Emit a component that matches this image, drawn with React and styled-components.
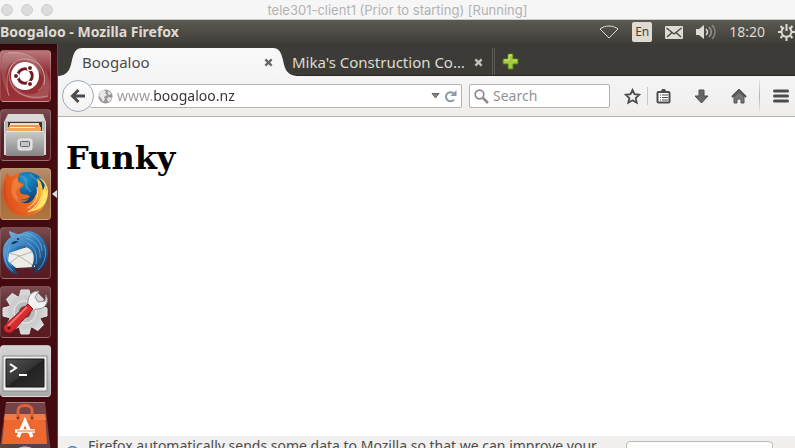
import React from "react";
import styled, { createGlobalStyle, css } from "styled-components";

const GlobalStyle = createGlobalStyle`
  *, *::before, *::after { box-sizing: border-box; }
  body { margin: 0; background: #fff; font-family: "Noto Sans", sans-serif; font-size: 14px; line-height: 20px; }
  button { padding: 0; border: 0; background: none; font: inherit; color: inherit; }
  svg { display: block; flex: none; }
`;

const Screen = styled.div`
  display: flex;
  flex-direction: column;
  height: 100vh;
  overflow: hidden;
`;

/* Host window title */
const HostBar = styled.header`
  display: grid;
  grid-template-columns: 1fr auto 1fr;
  align-items: center;
  flex: none;
  height: 20px;
  background: #f6f6f6;
  border-bottom: 1px solid #cbcdc4;
`;
const Lights = styled.div`
  display: flex;
  gap: 8px;
  padding-left: 1px;
`;
const Light = styled.button`
  width: 12px;
  height: 12px;
  border: 1px solid #cfcfcf;
  border-radius: 50%;
  background: #dcdcdc;
`;
const HostTitle = styled.div`
  color: #b2b2b2;
  font: 13px/18px "Inter", sans-serif;
  white-space: nowrap;
`;

/* Guest top panel */
const Panel = styled.div`
  display: flex;
  align-items: center;
  justify-content: space-between;
  flex: none;
  height: 24px;
  overflow: hidden;
  background: linear-gradient(#5b5a50, #3e3d39);
  color: #dfdbd2;
  white-space: nowrap;
`;
const PanelTitle = styled.strong`
  font-size: 14px;
  font-weight: 700;
`;
const Indicators = styled.div`
  display: flex;
  align-items: center;
  gap: 13px;
`;
const Indicator = styled.button`
  display: flex;
  align-items: center;
`;
const Language = styled.button`
  width: 20px;
  height: 20px;
  border-radius: 2px;
  background: #dfdbd2;
  color: #45443f;
  font-size: 12px;
`;

/* Launcher */
const Desktop = styled.div`
  display: flex;
  flex: 1;
  min-height: 0;
`;
const Launcher = styled.nav`
  display: flex;
  flex-direction: column;
  gap: 7px;
  flex: none;
  width: 58px;
  padding-top: 6px;
  overflow: hidden;
  background: linear-gradient(#30070a, #430b10 14px);
  border-right: 1px solid #7c3b41;
`;
const tones = {
  home: "linear-gradient(#b8777a, #8e2c30 45%, #9b3237)",
  dark: "linear-gradient(#7b4a4e, #54252a 50%, #5a1a20)",
  orange: "linear-gradient(#b98e6c, #a06a3e 50%, #b0763f)",
  grey: "linear-gradient(#d5d5d5, #a9a9a9)",
};
const LauncherButton = styled.button`
  display: flex;
  align-items: center;
  justify-content: center;
  flex: none;
  width: 51px;
  height: 52px;
  border: 1px solid rgba(255, 255, 255, 0.22);
  border-left-color: rgba(255, 255, 255, 0.12);
  border-radius: 4px;
  background: ${(p) => tones[p.$tone]};
`;
const LauncherRow = styled.div`
  display: flex;
  align-items: center;
  justify-content: space-between;
  flex: none;
`;
const FoldedButton = styled.button`
  flex: none;
  width: 51px;
  margin-top: -2px;
`;

/* Browser */
const Browser = styled.main`
  display: flex;
  flex-direction: column;
  flex: 1;
  min-width: 0;
`;
const TabStrip = styled.div`
  display: flex;
  align-items: flex-end;
  flex: none;
  height: 32px;
  background: #3c3b37;
  border-bottom: 1px solid #2c2522;
`;
const TabBox = styled.div`
  display: flex;
  align-items: stretch;
  height: 28px;
  margin-bottom: -1px;
  color: ${(p) => (p.$active ? "#4c4c4c" : "#dfdbd2")};
`;
const TabBody = styled.div`
  display: flex;
  align-items: center;
  justify-content: space-between;
  width: 191px;
  background: ${(p) => (p.$active ? "linear-gradient(#fafafa, #f5f4f4)" : "none")};
`;
const TabLabel = styled.button`
  flex: 1;
  min-width: 0;
  font-size: 15px;
  text-align: left;
  white-space: nowrap;
`;
const CloseButton = styled.button`
  display: flex;
  align-items: center;
`;
const InactiveTabs = styled.div`
  display: flex;
  align-items: flex-end;
  margin-left: -5px;
`;
const TabDivider = styled.div`
  width: 3px;
  height: 27px;
  margin-left: 9px;
  border: solid #5b5a55;
  border-width: 0 1px;
`;
const NewTab = styled.button`
  display: flex;
  align-items: center;
  height: 28px;
  padding-left: 7px;
`;
const Toolbar = styled.div`
  display: flex;
  align-items: center;
  flex: none;
  height: 41px;
  padding: 0 5px 0 4px;
  background: linear-gradient(#f6f5f5, #efeeed);
  border-bottom: 1px solid #b5b2ae;
`;
const BackButton = styled.button`
  display: flex;
  align-items: center;
  justify-content: center;
  flex: none;
  z-index: 1;
  width: 32px;
  height: 32px;
  margin-right: -4px;
  border: 1px solid #9dabb9;
  border-radius: 50%;
  background: linear-gradient(#fdfdfd, #f3f3f3);
`;
const Field = styled.div`
  display: flex;
  align-items: center;
  gap: 4px;
  flex: ${(p) => p.$grow} 1 0;
  min-width: 0;
  height: 24px;
  padding: 0 4px;
  border: 1px solid #b5b1ac;
  border-radius: 2px;
  background: #fff;
  ${(p) => p.$address && css`
    margin-right: 7px;
    padding-left: 8px;
    border-left: 0;
  `}
`;
const TextInput = styled.input`
  flex: 1;
  min-width: 0;
  height: 20px;
  padding: 0;
  border: 0;
  outline: 0;
  background: none;
  color: #333;
  font: 14px/20px "Noto Sans", sans-serif;
  &::placeholder { color: #929292; opacity: 1; }
`;
const AddressInput = styled(TextInput)`
  color: transparent;
  background: linear-gradient(90deg, #999 37px, #333 37px);
  background-clip: text;
  -webkit-background-clip: text;
`;
const Tools = styled.div`
  display: flex;
  align-items: center;
  flex: none;
  padding-left: 13px;
`;
const ToolGroup = styled.div`
  display: flex;
  gap: 20px;
`;
const ToolButton = styled.button`
  display: flex;
  align-items: center;
  justify-content: center;
  width: 18px;
  height: 24px;
`;
const ToolDivider = styled.div`
  width: 1px;
  height: ${(p) => (p.$tall ? "32px" : "18px")};
  margin: ${(p) => (p.$tall ? "0 12px 0 11px" : "0 6px")};
  background: ${(p) => (p.$tall ? "linear-gradient(#e8e8e8, #a9b2bb, #e8e8e8)" : "#c3c9cf")};
`;
const Page = styled.article`
  flex: 1;
  min-height: 0;
  padding: 21px 8px;
  background: #fff;
`;
const Heading = styled.h1`
  margin: 0;
  color: #000;
  font: 700 32px/40px "DejaVu Serif", serif;
`;
const Notice = styled.aside`
  display: flex;
  align-items: flex-start;
  flex: none;
  gap: 8px;
  height: 12px;
  padding: 0 22px 0 7px;
  overflow: hidden;
  background: #f1f0ef;
  color: #4c4c4c;
`;
const NoticeIcon = styled.span`
  padding-top: 10px;
`;
const NoticeText = styled.p`
  flex: 1;
  margin: 0;
  white-space: nowrap;
`;
const NoticeButton = styled.button`
  flex: none;
  width: 147px;
  height: 28px;
  margin-top: 5px;
  border: 1px solid #bdb9b4;
  border-radius: 4px;
  background: #fcfcfc;
`;

function UbuntuIcon() {
  return (
    <svg width="49" height="50" viewBox="0 0 49 50">
      <g fill="none" stroke="#fff">
        <path d="M8 45C2 24 10 7 25 8c13 1 21 12 18 26" opacity=".35" />
        <path d="M7 2C23 0 37 7 42 20c3 8 1 16-5 20" opacity=".35" />
        <path d="M47 45C30 49 13 44 9 30 7 22 8 15 14 11" opacity=".35" />
      </g>
      <path d="M3 2C23 0 40 8 42 26l-5-6C32 9 22 6 12 11 4 15 3 27 8 45-1 28-2 12 3 2" fill="#fff" opacity=".14" />
      <path d="M47 46C30 52 10 44 8 27l5 6c6 10 15 13 24 8 7-5 8-13 7-23 5 8 6 19 3 28" fill="#fff" opacity=".15" />
      <circle cx="24" cy="25" r="14" fill="#fff" />
      <circle cx="24" cy="25" r="7.2" fill="none" stroke="#701e22" strokeWidth="3" />
      <g stroke="#fff" strokeWidth="1.2">
        <path d="M24 25 16 25M24 25l5-8M24 25l5 8" />
        <g fill="#701e22"><circle cx="15" cy="25" r="2.6" /><circle cx="29" cy="17" r="2.6" /><circle cx="29" cy="33" r="2.6" /></g>
      </g>
      <circle cx="24" cy="25" r="5.4" fill="#fff" />
    </svg>
  );
}

function FilesIcon() {
  return (
    <svg width="49" height="50" viewBox="0 0 49 50">
      <defs><linearGradient id="cab" x1="0" y1="0" x2="0" y2="1"><stop stopColor="#ccc" /><stop offset="1" stopColor="#858585" /></linearGradient></defs>
      <path d="M7 4h35l3 8v33H3V12z" fill="#d9d9d9" />
      <path d="M4 11h40v12H4z" fill="#b9b9b9" />
      <path d="M7 12h34v10H7z" fill="#3c302a" />
      <path d="M9 13h29v3H9z" fill="#eee1cc" /><path d="M8 15h31v3H8z" fill="#ef9348" /><path d="M7 17h33v4H7z" fill="#f4a65a" /><path d="M9 17h25v1H9z" fill="#fff1cf" />
      <path d="M5 21h38v25H5z" fill="url(#cab)" /><path d="M5 21.500h38" stroke="#e9e9e9" />
      <rect x="17" y="29" width="14" height="11" rx="2" fill="#d8d8d8" stroke="#eee" />
      <rect x="19.500" y="31.500" width="9" height="5" rx="1" fill="#c5c5c5" stroke="#666" />
    </svg>
  );
}

function FirefoxIcon() {
  return (
    <svg width="49" height="50" viewBox="0 0 49 50">
      <defs>
        <radialGradient id="globe" cx=".45" cy=".2" r=".7"><stop stopColor="#2396cc" /><stop offset=".5" stopColor="#11619e" /><stop offset="1" stopColor="#142f60" /></radialGradient>
        <linearGradient id="fox" x1="0" y1=".7" x2="1" y2=".4"><stop stopColor="#dd4a1b" /><stop offset=".6" stopColor="#ee7023" /><stop offset=".85" stopColor="#f8b23a" /><stop offset="1" stopColor="#ffe863" /></linearGradient>
      </defs>
      <circle cx="26" cy="22" r="19" fill="url(#globe)" />
      <path d="M19 7c5 1 7 4 6 8s3 5 5 8M29 5c2 4 7 4 8 9" stroke="#5cb6dc" strokeWidth="2" fill="none" opacity=".4" />
      <path d="M4 8C3 13 1 19 2 26c1 12 10 21 22 21 13 0 22-9 22-22 0-3-1-6-2-9-1 2-1 4-2 6-1-6-2-10-6-13 2 8 1 14-2 18-2 5-6 8-11 7-4 0-6-3-7-5 5 3 9 1 13-1-1-3-5-2-8-3-3-2-3-5 0-7l2-2c-2-3-5-2-6-5 0-2 1-5 2-7-4 0-6 2-8 4-2-1-4-2-5-4" fill="url(#fox)" />
      <path d="M37 8c6 5 9 10 9 17l-4-5c0 12-5 19-15 23 13-1 20-9 20-20 0-6-3-12-10-15" fill="#ffe469" />
      <path d="M36 18c2 9-1 16-9 21m14-13c-2 8-7 13-14 17" stroke="#fff19b" strokeWidth="1.300" fill="none" opacity=".7" />
      <path d="M12 12c1-2 3-3 5-3-1 3 0 5 4 7-5 3-7 6-5 11 3 5 7 4 12 3-4 4-9 5-13 1C9 26 10 18 12 12" fill="#f58a45" opacity=".65" />
      <path d="M5 11c-4 9-2 21 6 29 5 4 10 6 16 5-11 1-21-7-22-18-1-6 0-11 0-16" fill="#bf3917" opacity=".45" />
    </svg>
  );
}

function ThunderbirdIcon() {
  return (
    <svg width="49" height="50" viewBox="0 0 49 50">
      <defs><linearGradient id="bird" x1=".1" y1="0" x2=".8" y2="1"><stop stopColor="#75b4dd" /><stop offset=".45" stopColor="#3079b9" /><stop offset="1" stopColor="#15345f" /></linearGradient></defs>
      <path d="M12 8C4 12 1 19 2 28c1 11 8 18 15 19-4-7-5-14 0-20 6-5 8-11 5-15z" fill="url(#bird)" />
      <path d="m8 25 18-6 9 5-1 15-19 1-8-7z" fill="#eeece8" />
      <path d="m8 25 11 3 14-5M9 35l9-7 15 10" stroke="#b6b3ad" fill="none" />
      <path d="M8 3c7 2 9 5 15 1 8-3 18 3 21 11 7 13 1 26-12 31 2-4 4-8 3-12-1 4-3 6-6 8 6-10 5-20-4-23-4-2-8-2-12 2-6 0-7 5-10 7 0-6 3-12 10-15-2-3-5-6-5-10" fill="url(#bird)" />
      <path d="M25 5c9 2 16 9 16 18M25 10c10 3 15 10 14 20M26 15c8 4 11 11 9 21m8-19c4 10 0 19-6 25M5 21C2 31 5 38 12 43M8 19c-3 9-2 15 3 19m5-29c4-4 9-2 14 0" stroke="#7bbae7" fill="none" opacity=".65" />
      <path d="M10 16c2-3 5-4 8-2-3 0-4 3-8 2" fill="#13365f" /><circle cx="17" cy="11" r="1" fill="#122d4f" />
    </svg>
  );
}

function SettingsIcon() {
  const teeth = Array.from({ length: 8 }, (_, i) => i * 45);
  return (
    <svg width="49" height="50" viewBox="0 0 49 50">
      <g fill="#d5d5d5" stroke="#e6e6e6">
        {teeth.map((a) => <path key={a} d="M20 3h8l2 8H18z" transform={`rotate(${a} 24 25)`} />)}
      </g>
      <circle cx="24" cy="25" r="17" fill="#cdcdcd" /><circle cx="24" cy="25" r="11" fill="#bcbcbc" stroke="#eee" /><circle cx="24" cy="25" r="6" fill="#71464a" />
      <path d="M27 19c-1-8 2-15 11-15l-4 6 3 5 7-1 1-6c4 8-2 15-10 14l-5 3-4-3z" fill="#f2f2f2" stroke="#929292" />
      <path d="m27 17 5 5-20 22c-5 5-12-1-8-6z" fill="#d82b2d" stroke="#8f171c" />
      <path d="M26 20 7 39" stroke="#f27470" strokeWidth="2" /><circle cx="8" cy="41" r="1.500" fill="#4c0f12" />
    </svg>
  );
}

function TerminalIcon() {
  return (
    <svg width="49" height="50" viewBox="0 0 49 50">
      <defs><linearGradient id="term" x1="0" y1="0" x2="1" y2="1"><stop stopColor="#555" /><stop offset=".5" stopColor="#333" /><stop offset=".51" stopColor="#222" /><stop offset="1" stopColor="#303030" /></linearGradient></defs>
      <path d="M2 10h44v35H2z" fill="#eee" stroke="#8a8a8a" />
      <path d="M5 13h38v28H5z" fill="url(#term)" stroke="#191919" />
      <path d="m9 18 6 4-6 4" fill="none" stroke="#fff" strokeWidth="2" /><path d="M18 29h8" stroke="#fff" strokeWidth="2" />
    </svg>
  );
}

function SoftwareIcon() {
  return (
    <svg width="51" height="52" viewBox="0 0 51 52">
      <path d="M6 0h39l6 52H-1z" fill="#734347" /><path d="M6 .5h39" stroke="#a77c7e" />
      <path d="M5 12h40l2 30H2z" fill="#ed682e" /><path d="M5 12h40l1 6H4z" fill="#f17b42" />
      <path d="M18 16V8c0-6 14-6 14 0v8" fill="none" stroke="#df6235" strokeWidth="3" />
      <circle cx="18" cy="16" r="1.500" fill="#8f3219" /><circle cx="32" cy="16" r="1.500" fill="#8f3219" />
      <path d="m18 35 7-16 7 16M15 29h20" fill="none" stroke="#fff" strokeWidth="3.500" /><path d="M17 29h18" stroke="#ed682e" strokeWidth="1" />
      <path d="M2 42h47l1 10H0z" fill="#5b4145" /><path d="M14 52c2-10 20-10 23 0" fill="#c6c0be" />
    </svg>
  );
}

const CloseIcon = () => (
  <svg width="9" height="9" viewBox="0 0 10 10" fill="none" stroke="currentColor" strokeWidth="2.500" opacity=".85"><path d="m1.500 1.500 7 7m0-7-7 7" /></svg>
);
const TabEdge = ({ right }) => (
  <svg width="24" height="28" viewBox="0 0 24 28">
    <path d={right ? "M0 0c6 0 8 4 10 12 2 11 5 15 14 16H0z" : "M24 0c-6 0-8 4-10 12-2 11-5 15-14 16h24z"} fill="#f7f6f6" />
  </svg>
);

function Tab({ active, title, label }) {
  return (
    <TabBox $active={active}>
      {active && <TabEdge />}
      <TabBody $active={active}>
        <TabLabel role="tab" aria-selected={!!active}>{title}</TabLabel>
        <CloseButton aria-label={`Close ${label}`}><CloseIcon /></CloseButton>
      </TabBody>
      {active && <TabEdge right />}
    </TabBox>
  );
}

const launcherItems = [
  ["Search your computer", "home", UbuntuIcon],
  ["Files", "dark", FilesIcon],
  ["Firefox", "orange", FirefoxIcon],
  ["Thunderbird Mail", "dark", ThunderbirdIcon],
  ["System Settings", "dark", SettingsIcon],
  ["Terminal", "grey", TerminalIcon],
];

export default function App() {
  return (
    <Screen>
      <GlobalStyle />
      <HostBar>
        <Lights><Light aria-label="Close window" /><Light aria-label="Minimize window" /><Light aria-label="Zoom window" /></Lights>
        <HostTitle>tele301-client1 (Prior to starting) [Running]</HostTitle>
      </HostBar>
      <Panel>
        <PanelTitle>Boogaloo - Mozilla Firefox</PanelTitle>
        <Indicators>
          <Indicator aria-label="Network">
            <svg width="20" height="14" viewBox="0 0 20 14" fill="none" stroke="#dfdbd2"><path d="M1 4c5-4 13-4 18 0l-9 9z" /></svg>
          </Indicator>
          <Language>En</Language>
          <Indicator aria-label="Messages">
            <svg width="18" height="13" viewBox="0 0 18 13"><rect width="18" height="13" rx="1" fill="#dfdbd2" /><path d="m1.500 2 7.500 6 7.500-6M2 11l5-4.500M16 11l-5-4.500" fill="none" stroke="#45443f" strokeWidth="1.300" /></svg>
          </Indicator>
          <Indicator aria-label="Sound">
            <svg width="20" height="16" viewBox="0 0 20 16" fill="none" stroke="#dfdbd2" strokeWidth="1.500"><path d="M0 5h3l5-4v14l-5-4H0z" fill="#dfdbd2" stroke="none" /><path d="M10 5c2 2 2 4 0 6" /><path d="M13 3c3 3 3 7 0 10" opacity=".55" /><path d="M16 1c4 4 4 10 0 14" opacity=".4" /></svg>
          </Indicator>
          <Indicator>18:20</Indicator>
          <Indicator aria-label="System">
            <svg width="17" height="18" viewBox="0 0 17 18" fill="none" stroke="#dfdbd2" strokeWidth="2"><path d="M6 4.500a5 5 0 1 0 5 0M8.500 1v7" /><path d="m2.500 3 2 2m8 0 2-2M0 9h4m9 0h4M2.500 15l2-2m8 0 2 2m-6-1v4" /></svg>
          </Indicator>
        </Indicators>
      </Panel>
      <Desktop>
        <Launcher aria-label="Launcher">
          {launcherItems.map(([name, tone, Icon]) => (
            <LauncherRow key={name}>
              <LauncherButton $tone={tone} aria-label={name}><Icon /></LauncherButton>
              {name === "Firefox" && <svg width="5" height="8" viewBox="0 0 5 8"><path d="M5 0v8L0 4z" fill="#ddd" /></svg>}
            </LauncherRow>
          ))}
          <FoldedButton aria-label="Ubuntu Software Center"><SoftwareIcon /></FoldedButton>
        </Launcher>
        <Browser>
          <TabStrip role="tablist">
            <Tab active title="Boogaloo" label="Boogaloo" />
            <InactiveTabs>
              <Tab title="Mika's Construction Co…" label="Mika's Construction" />
              <TabDivider />
              <NewTab aria-label="Open a new tab">
                <svg width="17" height="17" viewBox="0 0 17 17"><path d="M6 1h5v5h5v5h-5v5H6v-5H1V6h5z" fill="#a4cb3a" stroke="#557c18" /><path d="M7 7V2h3M2 7h5m4 0h4" stroke="#d9ed8b" fill="none" /></svg>
              </NewTab>
            </InactiveTabs>
          </TabStrip>
          <Toolbar>
            <BackButton aria-label="Back">
              <svg width="16" height="16" viewBox="0 0 16 16" fill="none" stroke="#4c4c4c" strokeWidth="3"><path d="M15 8H3m5.500-6-6 6 6 6" /></svg>
            </BackButton>
            <Field $grow={359} $address>
              <svg width="15" height="15" viewBox="0 0 15 15"><circle cx="7.500" cy="7.500" r="7" fill="#999" /><path d="m2 3 3-2 3 1-1 2 2 2-3 2 1 2-2 3-2-4-2-2zM10 2l3 2-1 2-2-1zM10 8l4 1-3 4-2-2z" fill="#e8e8e8" /></svg>
              <AddressInput aria-label="Address" defaultValue="www.boogaloo.nz" />
              <CloseButton aria-label="Show history"><svg width="9" height="6" viewBox="0 0 9 6"><path d="M1 .5h7L4.500 5z" fill="#888" stroke="#666" /></svg></CloseButton>
              <CloseButton aria-label="Reload"><svg width="13" height="13" viewBox="0 0 12 13"><path d="M9.500 9.500a4.500 4.500 0 1 1-.5-6" fill="none" stroke="#8c9aa8" strokeWidth="2" /><path d="M12 0v6H6z" fill="#8c9aa8" /></svg></CloseButton>
            </Field>
            <Field $grow={131}>
              <svg width="15" height="15" viewBox="0 0 15 15" fill="none" stroke="#8c8c8c"><circle cx="5.500" cy="5.500" r="4.300" strokeWidth="1.700" /><path d="m9 9 5 5" strokeWidth="2.500" /></svg>
              <TextInput aria-label="Search" placeholder="Search" />
            </Field>
            <Tools>
              <ToolButton aria-label="Bookmark this page"><svg width="17" height="17" viewBox="0 0 17 17" fill="none" stroke="#4c4c4c" strokeWidth="1.800"><path d="m8.500 2 2 4.200 4.700.6-3.500 3.200 1 4.700-4.200-2.400-4.200 2.400 1-4.700-3.500-3.200 4.700-.6z" /></svg></ToolButton>
              <ToolDivider />
              <ToolGroup>
                <ToolButton aria-label="Bookmarks menu"><svg width="15" height="16" viewBox="0 0 15 16"><rect x="1.500" y="4" width="12" height="10.500" rx="1" fill="#fff" stroke="#4c4c4c" strokeWidth="2" /><path d="M3 3h2l1-2h3l1 2h2v2H3z" fill="#4c4c4c" /><path d="M4 7h1m1 0h6M4 9.500h1m1 0h6M4 12h1m1 0h6" stroke="#4c4c4c" /></svg></ToolButton>
                <ToolButton aria-label="Downloads"><svg width="15" height="15" viewBox="0 0 15 15"><path d="M5 1h5v6h4l-6.500 7L1 7h4z" fill="#686868" stroke="#4c4c4c" /></svg></ToolButton>
                <ToolButton aria-label="Home"><svg width="16" height="15" viewBox="0 0 16 15"><path d="M3 8v6h3v-4h4v4h3V8L8 3z" fill="#777" stroke="#555" /><path d="m1 8 7-7 7 7" fill="none" stroke="#4c4c4c" strokeWidth="2" /></svg></ToolButton>
              </ToolGroup>
              <ToolDivider $tall />
              <ToolButton aria-label="Open menu"><svg width="16" height="14" viewBox="0 0 16 14" stroke="#4c4c4c" strokeWidth="3" strokeLinecap="round"><path d="M1.500 2h13m-13 5h13m-13 5h13" /></svg></ToolButton>
            </Tools>
          </Toolbar>
          <Page><Heading>Funky</Heading></Page>
          <Notice>
            <NoticeIcon><svg width="15" height="15" viewBox="0 0 15 15"><circle cx="7.500" cy="7.500" r="7" fill="#84b5e4" stroke="#3872b4" /></svg></NoticeIcon>
            <NoticeText>Firefox automatically sends some data to Mozilla so that we can improve your</NoticeText>
            <NoticeButton aria-label="Choose what I share" />
          </Notice>
        </Browser>
      </Desktop>
    </Screen>
  );
}
